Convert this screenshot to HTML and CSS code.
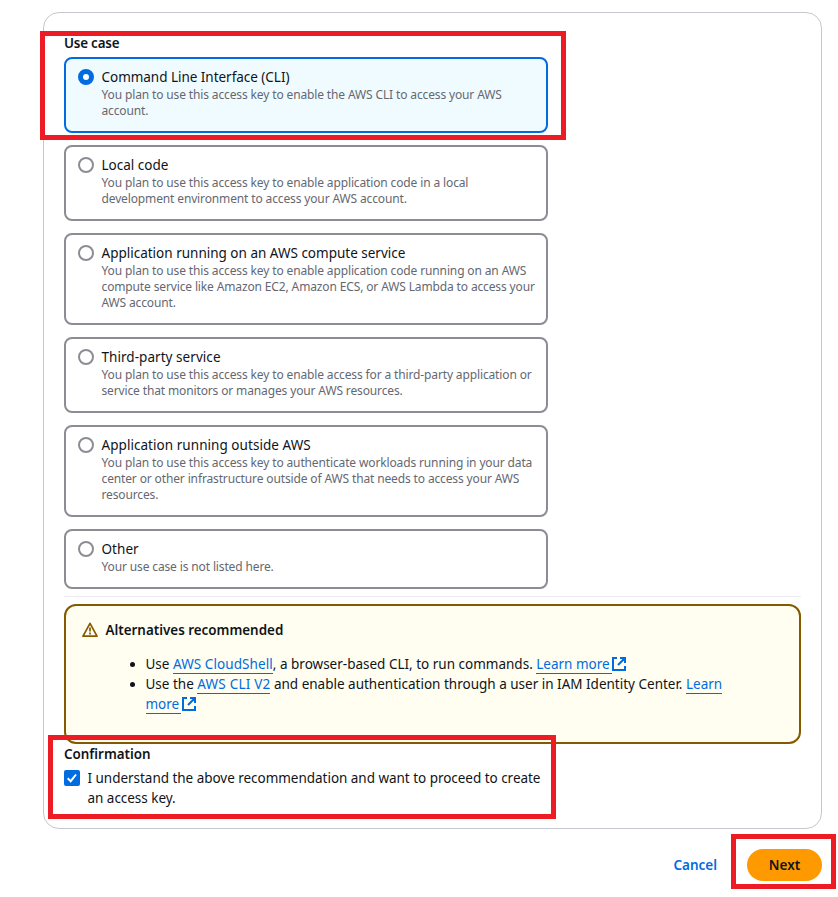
FILE: index.html
```html
<!DOCTYPE html>
<html lang="en">
<head>
<meta charset="utf-8">
<title>Access key best practices &amp; alternatives</title>
<link rel="stylesheet" href="styles.css">
</head>
<body>
<main class="panel">
  <h3 class="label">Use case</h3>
  <div class="tiles">
    <div class="tile selected"><span class="radio"></span><div><div class="title">Command Line Interface (CLI)</div><p class="desc">You plan to use this access key to enable the AWS CLI to access your AWS<br>account.</p></div></div>
    <div class="tile"><span class="radio"></span><div><div class="title">Local code</div><p class="desc">You plan to use this access key to enable application code in a local<br>development environment to access your AWS account.</p></div></div>
    <div class="tile"><span class="radio"></span><div><div class="title">Application running on an AWS compute service</div><p class="desc">You plan to use this access key to enable application code running on an AWS<br>compute service like Amazon EC2, Amazon ECS, or AWS Lambda to access your<br>AWS account.</p></div></div>
    <div class="tile"><span class="radio"></span><div><div class="title wide">Third-party service</div><p class="desc">You plan to use this access key to enable access for a third-party application or<br>service that monitors or manages your AWS resources.</p></div></div>
    <div class="tile"><span class="radio"></span><div><div class="title wide">Application running outside AWS</div><p class="desc">You plan to use this access key to authenticate workloads running in your data<br>center or other infrastructure outside of AWS that needs to access your AWS<br>resources.</p></div></div>
    <div class="tile"><span class="radio"></span><div><div class="title wide">Other</div><p class="desc">Your use case is not listed here.</p></div></div>
  </div>
  <hr class="divider">
  <section class="alert">
    <div class="alert-head">
      <svg class="warn" width="16" height="16" viewBox="0 0 16 16"><path d="M8 1.300 15 14.200H1Z"/><path class="thin" d="M8 5.500v4M8 10.500v2"/></svg>
      <h4>Alternatives recommended</h4>
    </div>
    <ul>
      <li>Use <a class="product">AWS CloudShell</a>, a browser-based CLI, to run commands. <a class="external">Learn more</a><svg class="ext" width="16" height="16" viewBox="0 0 16 16"><path d="M6 2H2v12h12v-4M9 2h5v5M14 2 7 9"/></svg></li>
      <li>Use the <a class="product v2">AWS CLI V2</a> and enable authentication through a user in IAM Identity Center. <a class="external">Learn<br>more</a><svg class="ext" width="16" height="16" viewBox="0 0 16 16"><path d="M6 2H2v12h12v-4M9 2h5v5M14 2 7 9"/></svg></li>
    </ul>
  </section>
  <h3 class="label confirm">Confirmation</h3>
  <div class="check">
    <svg width="16" height="16" viewBox="0 0 16 16"><rect width="16" height="16" rx="2"/><path d="M3.700 8.300 6.700 11.200 12 4.500"/></svg>
    <p>I understand the above recommendation and want to proceed to create<br>an access key.</p>
  </div>
</main>
<footer class="actions"><a class="cancel">Cancel</a><button class="next">Next</button></footer>
<div class="mark mark-usecase"></div>
<div class="mark mark-confirm"></div>
<div class="mark mark-next"></div>
</body>
</html>
```
FILE: styles.css
```css
* { box-sizing: border-box; }
body { margin: 0; padding: 12px 16px 0 43px; height: 897px; overflow: hidden; position: relative; background: #fff; color: #0f141a; font: 13.5px/20px "Noto Sans", sans-serif; }
h3, h4, p, ul { margin: 0; font-size: inherit; }
.panel { width: 779px; height: 817px; border: 1px solid #c6c6cd; border-radius: 16px; padding: 20px; }
.label { font-weight: 600; font-size: 13.400px; height: 20px; margin-bottom: 4px; }
.label:first-child { letter-spacing: -0.200px; }
.tiles { display: grid; gap: 12px; width: 484px; }
.tile { display: flex; gap: 7.500px; border: 2px solid #8c8c94; border-radius: 8px; padding: 8px 0 12px 12px; white-space: nowrap; }
.tile.selected { border-color: #006ce0; background: #f0fbff; }
.selected .title { letter-spacing: -0.030px; }
.title.wide { letter-spacing: 0.050px; }
.radio { width: 16px; height: 16px; margin-top: 2px; border: 2px solid #8c8c94; border-radius: 50%; background: #fff; flex: none; }
.selected .radio { border: 5px solid #006ce0; }
.desc { font-size: 12px; line-height: 16px; letter-spacing: -0.135px; color: #656871; }
.divider { border: 0; height: 1px; background: #ebebf0; margin: 7px 0; }
.alert { height: 140px; border: 2px solid #855900; border-radius: 12px; background: #fffef0; padding: 14px 16px; white-space: nowrap; }
.alert-head { display: flex; align-items: center; gap: 7.500px; height: 20px; margin-bottom: 14px; }
.alert-head h4 { font-size: 13.400px; font-weight: 600; }
.warn { fill: none; stroke: #855900; stroke-width: 1.700; stroke-linejoin: round; }
.warn .thin { stroke-width: 1.700; }
.alert ul { padding-left: 63.500px; }
a { color: #006ce0; }
li a { border-bottom: 1px solid #006ce0; }
.product { letter-spacing: 0.080px; }
.product.v2 { letter-spacing: 0.200px; }
.external { padding-right: 2px; }
.external + .ext { margin-left: -0.500px; }
.ext { vertical-align: -3px; fill: none; stroke: #006ce0; stroke-width: 2; }
.confirm { margin-bottom: 4px; }
.check { display: flex; gap: 7.500px; white-space: nowrap; }
.check p { letter-spacing: -0.030px; }
.check svg { margin-top: 2px; flex: none; fill: #006ce0; }
.check path { fill: none; stroke: #fff; stroke-width: 2; }
.actions { display: flex; justify-content: flex-end; align-items: center; gap: 30px; margin-top: 20px; height: 32px; font-size: 13.500px; font-weight: 600; }
.next { width: 75px; height: 32px; border: 0; border-radius: 16px; background: #f90; color: #0f141a; font: inherit; padding: 0; }
.mark { position: absolute; border: 5px solid #ed1c24; }
.mark-usecase { left: 40px; top: 31px; width: 526px; height: 109px; }
.mark-confirm { left: 48px; top: 735px; width: 508px; height: 84px; }
.mark-next { left: 731px; top: 834px; width: 105px; height: 55px; }
```
